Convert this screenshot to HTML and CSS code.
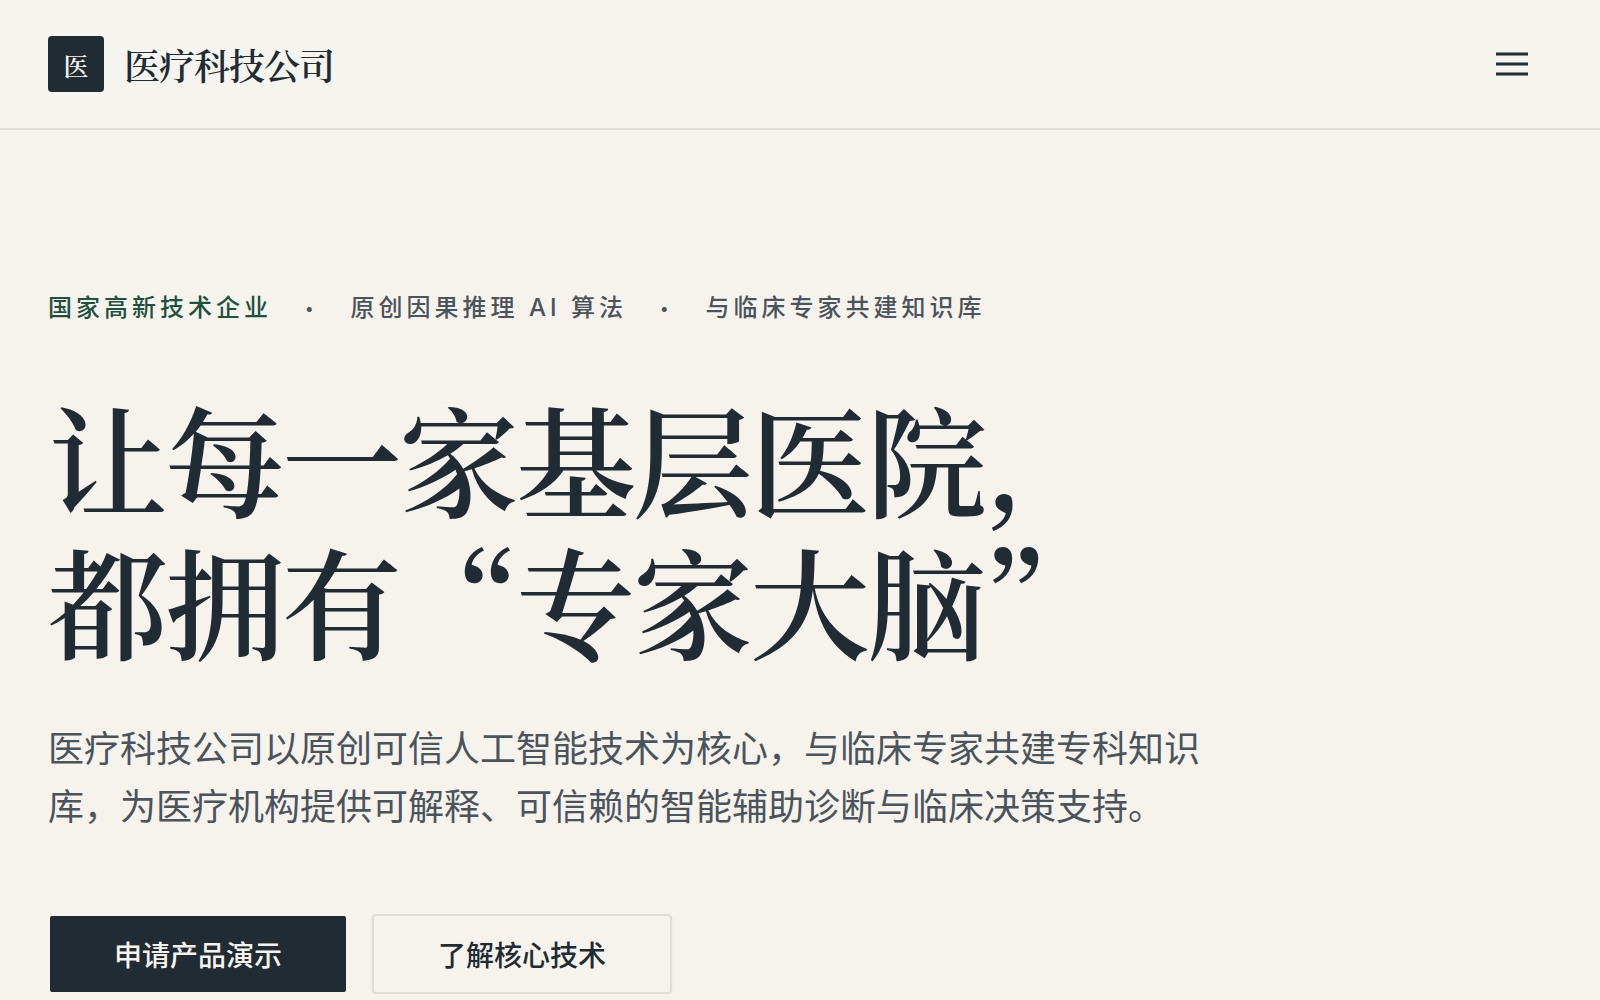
FILE: index.html
```html
<!DOCTYPE html>
<html lang="zh-CN">
<head>
    <meta charset="UTF-8">
    <meta name="viewport" content="width=device-width, initial-scale=1.0">
    <title>医疗科技公司</title>
    <link rel="stylesheet" href="styles.css">
</head>
<body>
    <header class="main-header">
        <a href="#" class="brand">
            <span class="brand-mark">医</span>
            <span class="brand-name">医疗科技公司</span>
        </a>
        <button type="button" class="menu-button" aria-label="菜单">
            <svg viewBox="0 0 32 24" width="32" height="24" fill="none" stroke="currentColor" stroke-width="3">
                <path d="M0 2h32M0 12h32M0 22h32"/>
            </svg>
        </button>
    </header>
    <main class="hero">
        <ul class="hero-tags">
            <li class="highlight">国家高新技术企业</li>
            <li class="dot">•</li>
            <li>原创因果推理 AI 算法</li>
            <li class="dot">•</li>
            <li>与临床专家共建知识库</li>
        </ul>
        <h1>让每一家基层医院,<br>都拥有“专家大脑”</h1>
        <p class="hero-text">医疗科技公司以原创可信人工智能技术为核心，与临床专家共建专科知识库，为医疗机构提供可解释、可信赖的智能辅助诊断与临床决策支持。</p>
        <div class="hero-actions">
            <a href="#demo" class="btn btn-primary">申请产品演示</a>
            <a href="#tech" class="btn btn-outline">了解核心技术</a>
        </div>
    </main>
</body>
</html>
```

FILE: styles.css
```css
* {
  box-sizing: border-box;
}
body {
  margin: 0;
  background-color: #f6f3ec;
  color: #202b33;
  font-family: Inter, "Noto Sans CJK SC", sans-serif;
}
.main-header {
  display: flex;
  justify-content: space-between;
  align-items: center;
  padding: 36px 48px;
  background-color: #f5f4ef;
  border-bottom: 2px solid #dfddd8;
}
.brand {
  display: flex;
  align-items: center;
  gap: 20px;
  color: #202b33;
  text-decoration: none;
  font-family: "Noto Serif CJK SC", "Noto Serif SC", serif;
  font-weight: 600;
}
.brand-mark {
  display: flex;
  align-items: center;
  justify-content: center;
  width: 56px;
  height: 56px;
  padding-top: 2px;
  border-radius: 4px;
  background-color: #202b33;
  color: #f6f3ec;
  font-size: 25px;
}
.brand-name {
  padding-top: 1px;
  font-size: 36px;
  letter-spacing: -1px;
}
.menu-button {
  display: flex;
  padding: 16px 24px;
  border: none;
  background: none;
  color: #202b33;
  cursor: pointer;
}
.hero {
  padding: 160px 48px 0;
}
.hero-tags {
  display: flex;
  gap: 33px;
  margin: 0;
  padding: 0;
  list-style: none;
  color: #4a545c;
  font-size: 24px;
  font-weight: 500;
  line-height: 36px;
  letter-spacing: 4px;
}
.hero-tags .highlight {
  color: #1f5140;
}
.hero-tags .dot {
  font-size: 16px;
}
h1 {
  margin: 60px 0 0;
  font-family: "Noto Serif CJK SC", "Noto Serif SC", serif;
  font-size: 120px;
  font-weight: 600;
  line-height: 142px;
  letter-spacing: -3px;
}
.hero-text {
  max-width: 1152px;
  margin: 50px 0 0;
  color: #4a545c;
  font-size: 36px;
  line-height: 58px;
}
.hero-actions {
  display: flex;
  gap: 24px;
  margin-top: 78px;
}
.btn {
  padding: 20px 64px 16px;
  border: 2px solid transparent;
  border-radius: 4px;
  font-size: 28px;
  font-weight: 500;
  line-height: 40px;
  text-decoration: none;
}
.btn-primary {
  background-color: #202b33;
  background-clip: padding-box;
  color: #f6f3ec;
}
.btn-outline {
  border-color: #dfddd8;
  box-shadow: 0 2px 4px rgba(32, 43, 51, 0.06);
  color: #202b33;
}
```
